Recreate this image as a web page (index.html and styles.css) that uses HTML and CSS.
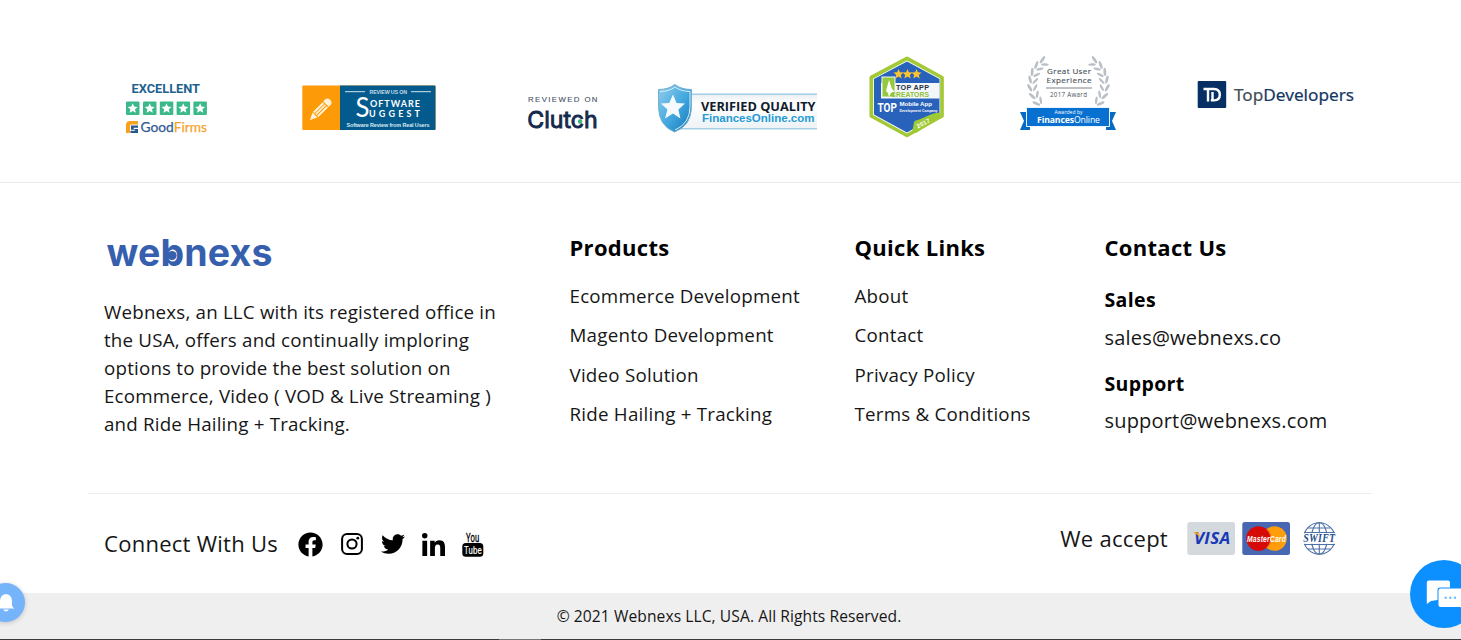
FILE: index.html
```html
<!DOCTYPE html>
<html lang="en">
<head>
<meta charset="utf-8">
<title>Webnexs</title>
<link rel="stylesheet" href="styles.css">
</head>
<body>
<section class="partners">
  <svg class="goodfirms" viewBox="120 50 95 90" width="95" height="90">
    <text class="roboto bold" x="131.500" y="93.300" font-size="13.500" fill="#1d628f" textLength="68.500" lengthAdjust="spacingAndGlyphs">EXCELLENT</text>
    <g fill="#3cb98a">
      <rect x="126" y="101.500" width="13.500" height="13.500" rx="1"/><rect x="143" y="101.500" width="13.500" height="13.500" rx="1"/><rect x="159.800" y="101.500" width="13.500" height="13.500" rx="1"/><rect x="176.600" y="101.500" width="13.500" height="13.500" rx="1"/><rect x="193.400" y="101.500" width="13.500" height="13.500" rx="1"/>
    </g>
    <defs><path id="star" d="M0-5 1.400-1.700 5-1.400 2.300 1 3.100 4.500 0 2.600-3.100 4.500-2.300 1-5-1.400-1.400-1.700Z"/></defs>
    <g fill="#fff"><use href="#star" x="132.700" y="108.300"/><use href="#star" x="149.700" y="108.300"/><use href="#star" x="166.500" y="108.300"/><use href="#star" x="183.300" y="108.300"/><use href="#star" x="200.100" y="108.300"/></g>
    <path d="M126 133v-8q0-4 4-4h8v3.500h-6.500q-1.500 0-1.500 1.500v7z" fill="#f8a11d"/>
    <path d="M131 125.500h7v2.300h-4.300v1.200h4.300v4h-7.500v-2.200h4.600v-1h-4.100z" fill="#24588f"/>
    <text class="lato" x="140.500" y="131.600" font-size="13" textLength="66.500" lengthAdjust="spacingAndGlyphs" fill="#315b96" stroke="#315b96" stroke-width=".25">Good<tspan fill="#f6a52c" stroke="#f6a52c">Firms</tspan></text>
  </svg>
  <svg class="suggest" viewBox="300 50 140 90" width="140" height="90">
    <rect x="302.300" y="85.500" width="133.300" height="44.500" rx="1" fill="#fd9a08"/>
    <path d="M340 85.500h94.500q1 0 1 1v42.500q0 1-1 1h-94.500z" fill="#035a8d"/>
    <g transform="translate(310 120) rotate(-45)"><path d="M0 0 7-3.500V3.500zM8-3.600h13.500v2H8zM8-.7h13.500v1.600H8zM8 1.900h13.500v2H8zM22.500-3.900h3q3 .5 3 3.900t-3 3.900h-3z" fill="#fff2d8"/></g>
    <path d="M345 91.700h20M411 91.700h20" stroke="#d3e5ee"/>
    <g fill="#fff">
      <text class="sans bold" x="369.500" y="93.800" font-size="5.300" textLength="37.500" fill="#c4dae7">REVIEW US ON</text>
      <text class="lato" x="355.500" y="117" font-size="27" textLength="14" lengthAdjust="spacingAndGlyphs">S</text>
      <text class="lato bold" x="370" y="106.800" font-size="9" textLength="50">OFTWARE</text>
      <text class="lato bold" x="369" y="117.300" font-size="9" textLength="51">UGGEST</text>
      <text class="sans bold" x="346.500" y="127" font-size="5.400" textLength="83" fill="#dbe9f1">Software Review from Real Users</text>
    </g>
  </svg>
  <svg class="clutch" viewBox="520 50 85 90" width="85" height="90">
    <text class="sans" x="528" y="101.500" font-size="7.800" textLength="69.500" fill="#42505f" stroke="#42505f" stroke-width=".1">REVIEWED ON</text>
    <text class="inter" x="527.300" y="128" font-size="23.500" textLength="70.500" lengthAdjust="spacingAndGlyphs" fill="#13294a" stroke="#13294a" stroke-width=".9">Clutch</text>
    <circle cx="580" cy="121.500" r="2.200" fill="#3bb37a"/>
  </svg>
  <svg class="verified" viewBox="650 50 175 90" width="175" height="90">
    <defs><linearGradient id="shield" x1="0" y1="0" x2="1" y2="1"><stop offset="0" stop-color="#94cfee"/><stop offset=".55" stop-color="#40a6de"/><stop offset="1" stop-color="#1375b6"/></linearGradient>
    <linearGradient id="ribbon" x1="0" y1="0" x2="0" y2="1"><stop offset="0" stop-color="#e9eef1"/><stop offset=".3" stop-color="#fff"/><stop offset="1" stop-color="#edf2f5"/></linearGradient></defs>
    <rect x="684" y="93.500" width="133" height="35.500" fill="url(#ribbon)"/>
    <path d="M690 94.200h127M680 128.700h137" stroke="#a5cfe5" stroke-width="1.500"/>
    <path d="M658.500 89.500q10 0 16.300-5 6.500 5 16.700 5v17q0 19-17 25.500-16-6.500-16-25.500z" fill="url(#shield)" stroke="#70afd2"/>
    <path d="M660 91.500q9 0 15-4.500 6 4.500 15 4.500v15q0 17-15 23.500" fill="none" stroke="#d7eff9" stroke-width="1"/>
    <path d="m673 94.500 3.500 8.500 8.500.5-6.600 6 2 9-7.400-5-8 5 2.400-9-6.600-6 8.400-.5z" fill="#f4fafd"/>
    <text class="open bold" x="701" y="110.700" font-size="13" textLength="114.500" lengthAdjust="spacingAndGlyphs" fill="#111c2c">VERIFIED QUALITY</text>
    <text class="sans bold" x="702" y="122" font-size="11.200" textLength="112.500" lengthAdjust="spacingAndGlyphs" fill="#249bd5">FinancesOnline.com</text>
  </svg>
  <svg class="topapp" viewBox="860 50 95 90" width="95" height="90">
    <defs><clipPath id="hex"><path d="M907 61.500 939.500 79v35.500L907 132.500 874 114.500V79z"/></clipPath></defs>
    <path d="M907 58.300 942 77.500v38.500L907 135.500 871.300 116V77.500z" fill="#fff" stroke="#a4c936" stroke-width="3.700" stroke-linejoin="round"/>
    <g clip-path="url(#hex)"><path d="M870 55h75v85h-75z" fill="#2862bb"/><path d="M881 83h63v15.500h-63z" fill="#f4f7f8"/></g>
    <g fill="#ffc42c"><use href="#star" x="898.500" y="74"/><use href="#star" x="907.500" y="74"/><use href="#star" x="916.500" y="74"/></g>
    <rect x="882" y="77" width="13" height="20" fill="#94c83d" stroke="#f4f7f8"/><path d="m886 91 3-11 3 9 3 3-4 1-2 4-1-4z" fill="#fff"/>
    <text class="sans bold" x="896" y="90.300" font-size="7.200" textLength="33" fill="#26334a">TOP APP</text>
    <text class="sans bold" x="891" y="96.800" font-size="6.800" textLength="38" fill="#8ec135">CREATORS</text>
    <g fill="#fff"><text class="roboto bold" transform="translate(877.500 111.500) scale(.74 1)" font-size="13.500">TOP</text>
    <text class="sans bold" x="899.500" y="105.600" font-size="6.200" textLength="32.500">Mobile App</text><text class="sans bold" x="899.500" y="112" font-size="4.400" textLength="38" lengthAdjust="spacingAndGlyphs">Development Company</text></g>
    <path d="m912 133 2-11q1-2 4-2l14-6q7-2 8-1v4l-24 16z" fill="#9dca36"/><text class="sans bold" transform="translate(918 128.500) rotate(-28)" font-size="6" textLength="14" fill="#fff">2017</text>
  </svg>
  <svg class="experience" viewBox="1015 50 105 90" width="105" height="90">
    <defs>
      <g id="leaves"><ellipse cx="2" cy="-2" rx="4.200" ry="1.400" transform="rotate(-28)"/><ellipse cx="2" cy="2" rx="3.800" ry="1.200" transform="rotate(30)"/></g>
      <g id="wreath" fill="#b9bfc5">
        <use href="#leaves" transform="translate(1043 62.500) rotate(-28)"/><use href="#leaves" transform="translate(1037.500 67.500) rotate(-42)"/><use href="#leaves" transform="translate(1034 74) rotate(-58)"/><use href="#leaves" transform="translate(1032.500 81) rotate(-75)"/><use href="#leaves" transform="translate(1032.500 88.500) rotate(-92)"/><use href="#leaves" transform="translate(1035 96) rotate(-110)"/><use href="#leaves" transform="translate(1039 102.500) rotate(-128)"/>
      </g>
    </defs>
    <use href="#wreath"/><use href="#wreath" transform="translate(2137 0) scale(-1 1)"/>
    <g fill="#4b535b" text-anchor="middle" class="open">
      <text x="1069" y="74.300" font-size="8" textLength="44" stroke="#4b535b" stroke-width=".15">Great User</text><text x="1069" y="82.700" font-size="8" textLength="45" stroke="#4b535b" stroke-width=".15">Experience</text>
      <text x="1068.500" y="96.800" font-size="6.200" textLength="37">2017 Award</text>
    </g>
    <path d="M1046 88h46" stroke="#59616a" stroke-width=".8"/>
    <path d="M1020 112h10v18h-10l4-9zM1116 112h-10v18h10l-4-9z" fill="#0869c2"/>
    <path d="M1026.500 107.500h83v19h-83z" fill="#0870d0" stroke="#e8f4ff"/>
    <g fill="#fff" text-anchor="middle" class="open"><text x="1068.500" y="114.300" font-size="5" textLength="28">Awarded by</text><text class="open" x="1068.500" y="122.700" font-size="8.700" textLength="63"><tspan font-weight="700">Finances</tspan>Online</text></g>
  </svg>
  <svg class="topdev" viewBox="1190 50 170 90" width="170" height="90">
    <rect x="1197.700" y="81" width="28.500" height="27" rx="1" fill="#062f64"/>
    <path d="M1203.500 89h10.500q5.800.3 5.800 5.700t-5.800 5.700h-3.200M1208 89v12.500M1212.500 92v8.500" fill="none" stroke="#fff" stroke-width="2.400"/>
    <text class="noto" x="1234" y="101" font-size="17" textLength="120" lengthAdjust="spacingAndGlyphs" fill="#444d56" stroke="#444d56" stroke-width=".2">Top<tspan fill="#153765" stroke="#153765">Developers</tspan></text>
  </svg>
</section>

<footer>
  <div class="columns">
    <div class="about">
      <svg class="logo" viewBox="104 226 172 50" width="172" height="50" role="img" aria-label="webnexs">
        <circle cx="172" cy="255.500" r="4.600" fill="#365fae"/>
        <text class="inter bold" x="106.500" y="265.700" font-size="37.500" textLength="166" fill="#365fae">webnexs</text>
      </svg>
      <p>Webnexs, an LLC with its registered office in<br>the USA, offers and continually imploring<br>options to provide the best solution on<br>Ecommerce, Video ( VOD &amp; Live Streaming )<br>and Ride Hailing + Tracking.</p>
    </div>
    <nav class="products">
      <h2>Products</h2>
      <ul><li>Ecommerce Development</li><li>Magento Development</li><li>Video Solution</li><li>Ride Hailing + Tracking</li></ul>
    </nav>
    <nav class="quick">
      <h2>Quick Links</h2>
      <ul><li>About</li><li>Contact</li><li>Privacy Policy</li><li>Terms &amp; Conditions</li></ul>
    </nav>
    <div class="contact">
      <h2>Contact Us</h2>
      <h3>Sales</h3><div class="mail">sales@webnexs.co</div>
      <h3>Support</h3><div class="mail">support@webnexs.com</div>
    </div>
  </div>
  <div class="bottom">
    <div class="connect">
      <span>Connect With Us</span>
      <div class="social">
        <svg viewBox="0 0 512 512" width="25" height="25"><path d="M504 256C504 119 393 8 256 8S8 119 8 256c0 123.780 90.690 226.380 209.250 245V327.690h-63V256h63v-54.640c0-62.150 37-96.480 93.670-96.480 27.140 0 55.520 4.840 55.520 4.840v61h-31.280c-30.800 0-40.410 19.120-40.410 38.730V256h68.780l-11 71.690h-57.780V501C413.310 482.380 504 379.780 504 256z"/></svg>
        <svg viewBox="0 0 24 24" width="24" height="24"><rect x="2.100" y="2.100" width="19.800" height="19.800" rx="5" fill="none" stroke="#000" stroke-width="2"/><circle cx="12" cy="12" r="4.600" fill="none" stroke="#000" stroke-width="2"/><circle cx="17.800" cy="6.200" r="1.400"/></svg>
        <svg viewBox="0 0 512 512" width="24" height="24"><path d="M459.370 151.716c.325 4.548.325 9.097.325 13.645 0 138.720-105.583 298.558-298.558 298.558-59.452 0-114.680-17.219-161.137-47.106 8.447.974 16.568 1.299 25.340 1.299 49.055 0 94.213-16.568 130.274-44.832-46.132-.975-84.792-31.188-98.112-72.772 6.498.974 12.995 1.624 19.818 1.624 9.421 0 18.843-1.300 27.614-3.573-48.081-9.747-84.143-51.980-84.143-102.985v-1.299c13.969 7.797 30.214 12.670 47.431 13.319-28.264-18.843-46.781-51.005-46.781-87.391 0-19.492 5.197-37.360 14.294-52.954 51.655 63.675 129.300 105.258 216.365 109.807-1.624-7.797-2.599-15.918-2.599-24.040 0-57.828 46.782-104.934 104.934-104.934 30.213 0 57.502 12.670 76.670 33.137 23.715-4.548 46.456-13.320 66.599-25.340-7.798 24.366-24.366 44.833-46.132 57.827 21.117-2.273 41.584-8.122 60.426-16.243-14.292 20.791-32.161 39.308-52.628 54.253z"/></svg>
        <svg viewBox="0 0 448 448" width="23" height="23"><path d="M100.280 448H7.400V148.900h92.880zM53.790 108.100C24.090 108.100 0 83.500 0 53.800a53.790 53.790 0 0 1 107.580 0c0 29.700-24.100 54.300-53.790 54.300zM447.900 448h-92.680V302.400c0-34.700-.7-79.200-48.290-79.200-48.290 0-55.690 37.700-55.690 76.700V448h-92.780V148.900h89.080v40.800h1.300c12.400-23.500 42.690-48.300 87.880-48.300 94 0 111.280 61.900 111.280 142.300V448z"/></svg>
        <svg viewBox="462 528 22 33" width="22" height="33"><rect x="462.300" y="543" width="21" height="13.700" rx="3.500"/><text class="roboto" x="466" y="541.500" font-size="12" textLength="13.500" lengthAdjust="spacingAndGlyphs" stroke="#000" stroke-width=".3">You</text><text class="roboto" x="464" y="554" font-size="11.500" textLength="17.800" lengthAdjust="spacingAndGlyphs" fill="#fff" stroke="#fff" stroke-width=".2">Tube</text></svg>
      </div>
    </div>
    <div class="accept">
      <span>We accept</span>
      <svg viewBox="1186 520 151 37" width="151" height="37">
        <rect x="1187.300" y="522" width="47.700" height="33" rx="2.500" fill="#d4d9dd"/>
        <text class="open bold italic" x="1194" y="543.700" font-size="15.700" textLength="36.500" lengthAdjust="spacingAndGlyphs" fill="#1838b8">VISA</text><path d="M1192.800 532.300h4.500q1.700 0 2 1.800l.8 4.600q-2-4.500-7.300-6.100" fill="#f7a51c"/>
        <rect x="1242.300" y="522" width="47.700" height="33" rx="2.500" fill="#4767b3"/>
        <circle cx="1274.500" cy="538.500" r="12.300" fill="#ff9e0b"/><circle cx="1258.500" cy="538.500" r="12.300" fill="#d60b08"/><path d="M1266.500 529.100a12.300 12.300 0 0 1 0 18.800" fill="none" stroke="#ef6613" stroke-width="1.200"/>
        <text class="sans bold italic" x="1247" y="541.800" font-size="9.700" textLength="39" lengthAdjust="spacingAndGlyphs" fill="#fff">MasterCard</text>
        <g fill="none" stroke="#4d71a7" stroke-width="1.100"><circle cx="1319.300" cy="538.500" r="15.700"/><ellipse cx="1319.300" cy="538.500" rx="8" ry="15.700"/><path d="M1319.300 522.800v31.400M1308 528h22.600M1308 549h22.600M1304 532.500h31M1304 544.500h31"/></g>
        <path d="M1303 533.300h33v10.400h-33z" fill="#fff"/>
        <text class="serif bold italic" x="1303.300" y="542.300" font-size="11.500" textLength="32" lengthAdjust="spacingAndGlyphs" fill="#244d8e">SWIFT</text>
      </svg>
    </div>
  </div>
</footer>
<div class="copyright">© 2021 Webnexs LLC, USA. All Rights Reserved.</div>
<div class="edge"><span></span></div>

<div class="bell"><svg viewBox="0 0 18 20" width="18" height="20"><path d="M9 1q6 1 6 7v4q0 2 2.500 3.500h-17q2.500-1.500 2.500-3.500V8q0-6 6-7M6 16.500h6q-3 4-6 0" fill="#fff"/></svg></div>
<div class="chat"><svg viewBox="1410 560 51 68" width="51" height="68"><path d="M1429 580.500h19q2 0 2 2v5h-10q-2.500 0-2.500 2.500v10l-6.500 1-4.200 3v-21.500q0-2 2.200-2" fill="#fff"/><path d="M1440.500 588.500h25v23l-5-4.500h-20q-2 0-2-2v-14.500q0-2 2-2" fill="#fff"/><g fill="#6ebcff"><circle cx="1445.700" cy="597.800" r="1.200"/><circle cx="1450.300" cy="597.800" r="1.200"/><circle cx="1455" cy="597.800" r="1.200"/></g></svg></div>
</body>
</html>
```
FILE: styles.css
```css
* { box-sizing: border-box; }
body { margin: 0; height: 640px; overflow: hidden; position: relative; background: #fff; color: #161616; font-family: "Open Sans", sans-serif; }
svg { display: block; flex: none; overflow: visible; }
h2, h3, p, ul { margin: 0; padding: 0; }
ul { list-style: none; }

.sans { font-family: "Liberation Sans", sans-serif; }
.serif { font-family: "Liberation Serif", serif; }
.roboto { font-family: Roboto, sans-serif; }
.lato { font-family: Lato, sans-serif; }
.inter { font-family: Inter, sans-serif; }
.noto { font-family: "Noto Sans", sans-serif; }
.open { font-family: "Open Sans", sans-serif; }
.bold { font-weight: 700; }
.italic { font-style: italic; }

.partners { display: grid; grid-template-columns: 180px 220px 130px 210px 155px 175px 170px; height: 183px; padding: 50px 0 0 120px; border-bottom: 1px solid #ebebeb; }

footer { height: 410px; margin: 0 89px 0 88px; }
.columns { display: grid; grid-template-columns: 465.5px 285px 250px 1fr; height: 311px; padding: 49px 0 0 16px; border-bottom: 1px solid #ededed; }
.logo { margin-top: -6px; }
.about p { margin-top: 22px; font-size: 18.75px; letter-spacing: .19px; line-height: 28.1px; white-space: nowrap; }
h2 { font-size: 22px; line-height: 30px; font-weight: 700; letter-spacing: .3px; color: #000; white-space: nowrap; }
ul { margin-top: 14px; font-size: 18.75px; letter-spacing: .23px; line-height: 39.4px; white-space: nowrap; }
h3 { margin-top: 23px; font-size: 19.5px; line-height: 30px; letter-spacing: .35px; color: #000; }
.mail { margin-top: 7.500px; font-size: 20px; line-height: 30px; letter-spacing: .19px; }
.mail + h3 { margin-top: 16px; }

.bottom { display: flex; justify-content: space-between; padding: 26px 35px 0 16px; font-size: 22px; line-height: 30px; letter-spacing: .27px; white-space: nowrap; }
.connect { display: flex; align-items: center; gap: 20px; height: 50px; margin-top: -1px; }
.connect > span { margin-top: -3px; }
.social { display: flex; align-items: center; gap: 17px; }
.accept { display: flex; align-items: center; gap: 18px; height: 37px; }
.accept > span { margin-top: -2px; }

.copyright { height: 46px; background: #efefef; text-align: center; font-size: 15.6px; line-height: 46px; letter-spacing: .08px; padding-right: 3px; }
.edge { height: 1px; background: #3b3b3f; padding-left: 499px; }
.edge span { display: block; width: 42px; height: 1px; background: #77777a; }

.bell { position: absolute; left: -14px; top: 583px; width: 39px; height: 39px; padding: 10px 0 0 11px; border-radius: 50%; background: #75b3fb; box-shadow: 0 1px 5px #0003; }
.chat { position: absolute; left: 1410px; top: 560px; width: 68px; height: 68px; border-radius: 50%; background: #0c8fff; }
```
